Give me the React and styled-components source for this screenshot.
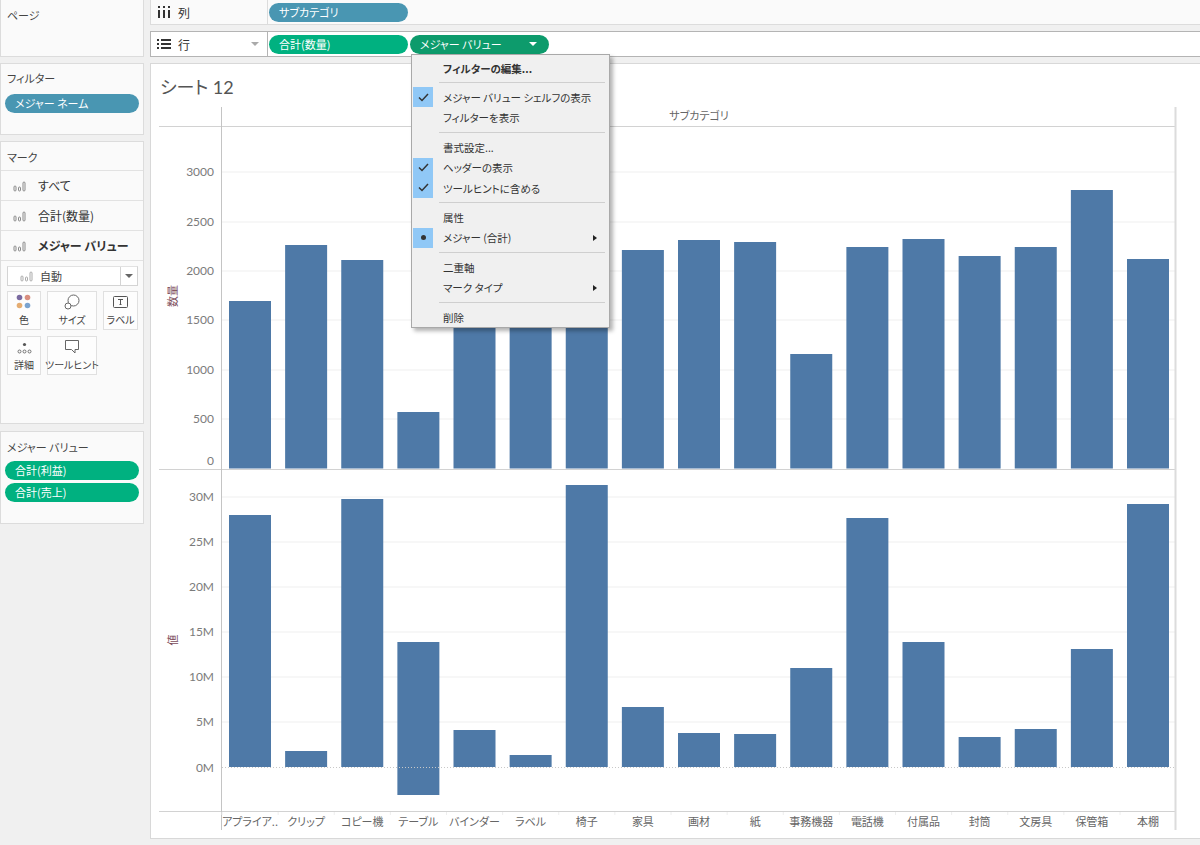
import React from "react";
import styled, { createGlobalStyle } from "styled-components";

const GlobalStyle = createGlobalStyle`
  html, body {
    margin: 0;
    padding: 0;
    background: #f0f0f0;
    overflow: hidden;
  }
  body {
    font-family: "Noto Sans CJK JP", "Noto Sans", sans-serif;
    font-feature-settings: "palt";
    color: #333;
  }
`;

const Page = styled.div`
  position: relative;
  width: 1200px;
  height: 845px;
  display: grid;
  grid-template-columns: 144px 1fr;
  column-gap: 6px;
`;

const Side = styled.div`
  display: flex;
  flex-direction: column;
`;

const Panel = styled.div`
  box-sizing: border-box;
  height: ${(p) => p.$h}px;
  margin-bottom: ${(p) => p.$mb || 6}px;
  background: #fafafa;
  border: 1px solid #dcdcdc;
  border-top: ${(p) => (p.$noTop ? "none" : "1px solid #dcdcdc")};
  padding: ${(p) => p.$pad || "0"};
`;

const PanelTitle = styled.div`
  font-size: 11px;
  line-height: 16px;
  padding-left: 6px;
  color: #444;
  margin-bottom: ${(p) => p.$mb || 0}px;
`;

const Pill = styled.div`
  box-sizing: border-box;
  display: flex;
  align-items: center;
  justify-content: space-between;
  width: ${(p) => p.$w || 134}px;
  height: 19px;
  border-radius: 10px;
  padding: 0 11px 0 10px;
  margin: ${(p) => p.$m || 0};
  background: ${(p) => p.$bg || "#4996b2"};
  color: #fff;
  font-size: 11px;
  line-height: 19px;
  white-space: nowrap;
`;

const MarkRow = styled.div`
  box-sizing: border-box;
  height: 30px;
  display: flex;
  align-items: center;
  gap: 12px;
  padding-left: 12px;
  border-top: 1px solid #e2e2e2;
  font-size: 12px;
  font-weight: ${(p) => (p.$bold ? 700 : 400)};
  color: #333;
`;

const MarkSelect = styled.div`
  box-sizing: border-box;
  display: flex;
  align-items: center;
  height: 20px;
  margin: 5px 5px 5px 6px;
  padding-left: 12px;
  gap: 7px;
  background: #fff;
  border: 1px solid #d4d4d4;
  border-top: 1px solid #e2e2e2;
  font-size: 11px;
  color: #444;
`;

const SelectArrow = styled.span`
  margin-left: auto;
  width: 16px;
  height: 18px;
  border-left: 1px solid #d4d4d4;
  display: flex;
  align-items: center;
  justify-content: center;
  &::after {
    content: "";
    border-left: 4px solid transparent;
    border-right: 4px solid transparent;
    border-top: 4px solid #666;
  }
`;

const MarkGrid = styled.div`
  display: grid;
  grid-template-columns: 34px 50px 35px;
  grid-auto-rows: 39px;
  gap: 6px;
  margin-left: 6px;
`;

const MarkButton = styled.div`
  box-sizing: border-box;
  border: 1px solid #e0e0e0;
  background: #fdfdfd;
  display: flex;
  flex-direction: column;
  align-items: center;
  justify-content: flex-end;
  font-size: 10px;
  line-height: 14px;
  padding-bottom: 2px;
  color: #444;
  white-space: nowrap;
  svg {
    margin-bottom: 3px;
  }
`;

const Main = styled.div`
  display: flex;
  flex-direction: column;
  min-width: 0;
`;

const Shelf = styled.div`
  box-sizing: border-box;
  display: flex;
  height: ${(p) => p.$h}px;
  margin-bottom: ${(p) => p.$mb}px;
  background: #fff;
  border: 1px solid ${(p) => (p.$dark ? "#b4b4b4" : "#dcdcdc")};
  border-top: ${(p) => (p.$noTop ? "none" : undefined)};
  border-right: none;
  background: ${(p) => (p.$dark ? "#fff" : "#fafafa")};
`;

const ShelfLabel = styled.div`
  box-sizing: border-box;
  width: 117px;
  display: flex;
  align-items: center;
  gap: 7px;
  padding-left: 6px;
  font-size: 12px;
  color: #333;
  border-right: 1px solid ${(p) => (p.$dark ? "#b4b4b4" : "#dcdcdc")};
`;

const ShelfArrow = styled.span`
  margin-left: auto;
  margin-right: 8px;
  border-left: 4px solid transparent;
  border-right: 4px solid transparent;
  border-top: 4px solid #aaa;
`;

const ShelfPills = styled.div`
  display: flex;
  align-items: center;
  gap: 2px;
  padding-left: 1px;
  padding-top: ${(p) => p.$pt || 0}px;
`;

const DownTri = styled.span`
  border-left: 4px solid transparent;
  border-right: 4px solid transparent;
  border-top: 4px solid #fff;
  margin-right: 1px;
`;

const Card = styled.div`
  box-sizing: border-box;
  height: 776px;
  background: #fff;
  border: 1px solid #d8d8d8;
  border-right: none;
  display: flex;
  flex-direction: column;
`;

const SheetTitle = styled.div`
  font-size: 18px;
  line-height: 24px;
  height: 39px;
  padding: 11px 0 0 9px;
  box-sizing: border-box;
  color: #555;
  font-family: "Lato", "Noto Sans CJK JP", sans-serif;
`;

const ChartSvg = styled.svg`
  display: block;
  width: 1049px;
  height: 735px;
`;

const AxisText = styled.text`
  font-family: "Lato", "Noto Sans CJK JP", sans-serif;
  font-size: 12px;
  fill: #7b7b7b;
  text-anchor: ${(p) => p.$anchor || "end"};
`;

const CategoryText = styled.text`
  font-family: "Noto Sans CJK JP", sans-serif;
  font-feature-settings: "palt";
  font-size: 11px;
  fill: #666;
  text-anchor: middle;
`;

const MeasureText = styled.text`
  font-family: "Noto Sans CJK JP", sans-serif;
  font-size: 11px;
  fill: #7a4a58;
  text-anchor: middle;
`;

const Menu = styled.div`
  position: absolute;
  left: 411px;
  top: 54px;
  box-sizing: border-box;
  width: 199px;
  height: 274px;
  padding-top: 3px;
  background: #f0f0f0;
  border: 1px solid #a9a9a9;
  box-shadow: 3px 3px 4px rgba(0, 0, 0, 0.3);
`;

const MenuRow = styled.div`
  position: relative;
  height: 20.4px;
  display: flex;
  align-items: center;
  padding-left: 31px;
  font-size: 10.5px;
  font-weight: ${(p) => (p.$bold ? 700 : 400)};
  color: #333;
  white-space: nowrap;
`;

const MenuMark = styled.span`
  position: absolute;
  left: 1px;
  top: 0;
  width: 20px;
  height: 20px;
  background: #90c8f6;
  display: flex;
  align-items: center;
  justify-content: center;
`;

const MenuDot = styled.span`
  width: 5px;
  height: 5px;
  border-radius: 50%;
  background: #333;
`;

const MenuSub = styled.span`
  position: absolute;
  right: 12px;
  top: 7px;
  border-top: 3.5px solid transparent;
  border-bottom: 3.5px solid transparent;
  border-left: 4px solid #222;
`;

const MenuSep = styled.div`
  height: 9px;
  margin: 0 4px 0 27px;
  display: flex;
  align-items: center;
  &::after {
    content: "";
    flex: 1;
    height: 1px;
    background: #cfcfcf;
  }
`;

const BarsIcon = ({ color = "#8a8a8a" }) => (
  <svg width="13" height="12" viewBox="0 0 13 12" fill="none" stroke={color} strokeWidth="1">
    <rect x="1" y="6" width="2" height="5" rx="1" />
    <rect x="5.5" y="7" width="2" height="4" rx="1" />
    <rect x="10" y="2" width="2" height="9" rx="1" />
  </svg>
);

const ColumnsIcon = () => (
  <svg width="14" height="12" viewBox="0 0 14 12" fill="#333">
    <rect x="1" y="0" width="2" height="2" />
    <rect x="6" y="0" width="2" height="2" />
    <rect x="11" y="0" width="2" height="2" />
    <rect x="1" y="4" width="2" height="8" />
    <rect x="6" y="4" width="2" height="8" />
    <rect x="11" y="4" width="2" height="8" />
  </svg>
);

const RowsIcon = () => (
  <svg width="14" height="12" viewBox="0 0 14 12" fill="#333">
    <rect x="0" y="1" width="2" height="2" />
    <rect x="4" y="1" width="10" height="2" />
    <rect x="0" y="5" width="2" height="2" />
    <rect x="4" y="5" width="10" height="2" />
    <rect x="0" y="9" width="2" height="2" />
    <rect x="4" y="9" width="10" height="2" />
  </svg>
);

const ColorIcon = () => (
  <svg width="16" height="16" viewBox="0 0 16 16">
    <circle cx="3.5" cy="3.5" r="2.8" fill="#7a6aa0" />
    <circle cx="11.5" cy="3.5" r="2.8" fill="#d98f80" />
    <circle cx="3.5" cy="11.5" r="2.8" fill="#e5ad72" />
    <circle cx="11.5" cy="11.5" r="2.8" fill="#7ba4d0" />
  </svg>
);

const SizeIcon = () => (
  <svg width="16" height="16" viewBox="0 0 16 16" fill="#fff" stroke="#666" strokeWidth="1">
    <circle cx="9.5" cy="6.5" r="5.5" />
    <circle cx="4" cy="12" r="3" />
  </svg>
);

const LabelIcon = () => (
  <svg width="16" height="16" viewBox="0 0 16 16" fill="none" stroke="#555" strokeWidth="1">
    <rect x="0.5" y="2.5" width="14" height="11" rx="1" />
    <path d="M5 5.5h5M7.5 5.5v5M6.5 10.5h2" />
  </svg>
);

const DetailIcon = () => (
  <svg width="15" height="14" viewBox="0 0 15 14" fill="none" stroke="#666" strokeWidth="0.9">
    <circle cx="7.5" cy="3.5" r="1.6" fill="#555" stroke="none" />
    <circle cx="2.5" cy="10.5" r="1.5" />
    <circle cx="7.5" cy="10.5" r="1.5" />
    <circle cx="12.5" cy="10.5" r="1.5" />
  </svg>
);

const TooltipIcon = () => (
  <svg width="16" height="16" viewBox="0 0 16 16" fill="#fff" stroke="#666" strokeWidth="1">
    <path d="M1.5 1.5h13v9h-3.5v3.5l-3.5-3.5h-6z" />
  </svg>
);

const CheckIcon = () => (
  <svg width="11" height="9" viewBox="0 0 11 9" fill="none" stroke="#333" strokeWidth="1.5">
    <path d="M1 4.5l3 3 6-6.5" />
  </svg>
);

const BAR_X = (i) => 229 + i * 56.125;
const ZERO_TOP = 468.5;
const ZERO_BOTTOM = 767;

const categories = [
  { name: "アプライア..", top: 301, low: 515 },
  { name: "クリップ", top: 245, low: 751 },
  { name: "コピー機", top: 260, low: 499 },
  { name: "テーブル", top: 412, low: 642, under: 795 },
  { name: "バインダー", top: 250, low: 730 },
  { name: "ラベル", top: 250, low: 755 },
  { name: "椅子", top: 250, low: 485 },
  { name: "家具", top: 250, low: 707 },
  { name: "画材", top: 240, low: 733 },
  { name: "紙", top: 242, low: 734 },
  { name: "事務機器", top: 354, low: 668 },
  { name: "電話機", top: 247, low: 518 },
  { name: "付属品", top: 239, low: 642 },
  { name: "封筒", top: 256, low: 737 },
  { name: "文房具", top: 247, low: 729 },
  { name: "保管箱", top: 190, low: 649 },
  { name: "本棚", top: 259, low: 504 },
];

const topTicks = [
  { label: "3000", y: 172 },
  { label: "2500", y: 222 },
  { label: "2000", y: 271 },
  { label: "1500", y: 320 },
  { label: "1000", y: 370 },
  { label: "500", y: 419 },
];

const lowTicks = [
  { label: "30M", y: 497 },
  { label: "25M", y: 542 },
  { label: "20M", y: 587 },
  { label: "15M", y: 632 },
  { label: "10M", y: 677 },
  { label: "5M", y: 722 },
];

const Chart = () => (
  <ChartSvg viewBox="151 103 1049 735">
    {[...topTicks, ...lowTicks].map((t) => (
      <g key={t.label}>
        <line x1="222" x2="1175" y1={t.y} y2={t.y} stroke="#efefef" />
        <AxisText x="214" y={t.y + 4}>{t.label}</AxisText>
      </g>
    ))}
    <AxisText x="214" y="465">0</AxisText>
    <AxisText x="214" y={ZERO_BOTTOM + 5}>0M</AxisText>

    {categories.map((c, i) => (
      <rect key={c.name} x={BAR_X(i)} y={c.top} width="42" height={ZERO_TOP - c.top} fill="#4e79a7" />
    ))}
    {categories.map((c, i) => (
      <rect
        key={c.name}
        x={BAR_X(i)}
        y={c.low}
        width="42"
        height={(c.under || ZERO_BOTTOM) - c.low}
        fill="#4e79a7"
      />
    ))}
    <line x1="222" x2="1175" y1={ZERO_BOTTOM + 0.5} y2={ZERO_BOTTOM + 0.5} stroke="#c8c8c8" strokeDasharray="1 2" />

    <line x1="159" x2="1175" y1="126.5" y2="126.5" stroke="#d2d2d2" strokeWidth="1.2" />
    <line x1="159" x2="1175" y1="469.5" y2="469.5" stroke="#d2d2d2" strokeWidth="1.2" />
    <line x1="159" x2="1175" y1="811.5" y2="811.5" stroke="#d2d2d2" strokeWidth="1.2" />
    <line x1="221.5" x2="221.5" y1="107" y2="830" stroke="#c4c4c4" />
    <line x1="1175.5" x2="1175.5" y1="107" y2="830" stroke="#dcdcdc" strokeWidth="2" />
    {categories.map((c, i) => (
      <line key={c.name} x1={BAR_X(i) - 7} x2={BAR_X(i) - 7} y1="812" y2="815" stroke="#eeeeee" />
    ))}

    <CategoryText x="699" y="120">サブカテゴリ</CategoryText>
    {categories.map((c, i) => (
      <CategoryText key={c.name} x={BAR_X(i) + 21} y="826">{c.name}</CategoryText>
    ))}
    <MeasureText transform="translate(177 296) rotate(-90)">数量</MeasureText>
    <MeasureText transform="translate(177 640) rotate(-90)">値</MeasureText>
  </ChartSvg>
);

const App = () => (
  <>
    <GlobalStyle />
    <Page>
      <Side>
        <Panel $h={57} $noTop $pad="7px 0 0">
          <PanelTitle>ページ</PanelTitle>
        </Panel>
        <Panel $h={72} $pad="6px 0 0 4px">
          <PanelTitle $mb={8} style={{ paddingLeft: 2 }}>フィルター</PanelTitle>
          <Pill>メジャー ネーム</Pill>
        </Panel>
        <Panel $h={283} $mb={7} $pad="7px 0 0">
          <PanelTitle $mb={5}>マーク</PanelTitle>
          <MarkRow><BarsIcon />すべて</MarkRow>
          <MarkRow><BarsIcon />合計(数量)</MarkRow>
          <MarkRow $bold><BarsIcon />メジャー バリュー</MarkRow>
          <div style={{ borderTop: "1px solid #e2e2e2" }}>
            <MarkSelect><BarsIcon color="#aaa" />自動<SelectArrow /></MarkSelect>
          </div>
          <MarkGrid>
            <MarkButton><ColorIcon />色</MarkButton>
            <MarkButton><SizeIcon />サイズ</MarkButton>
            <MarkButton><LabelIcon />ラベル</MarkButton>
            <MarkButton><DetailIcon />詳細</MarkButton>
            <MarkButton><TooltipIcon />ツールヒント</MarkButton>
          </MarkGrid>
        </Panel>
        <Panel $h={93} $pad="7px 0 0 4px">
          <PanelTitle $mb={6} style={{ paddingLeft: 2 }}>メジャー バリュー</PanelTitle>
          <Pill $bg="#00b180" $m="0 0 3px">合計(利益)</Pill>
          <Pill $bg="#00b180">合計(売上)</Pill>
        </Panel>
      </Side>
      <Main>
        <Shelf $h={25} $mb={6} $noTop>
          <ShelfLabel><ColumnsIcon />列</ShelfLabel>
          <ShelfPills>
            <Pill $w={139}>サブカテゴリ</Pill>
          </ShelfPills>
        </Shelf>
        <Shelf $h={26} $mb={6} $dark>
          <ShelfLabel $dark><RowsIcon />行<ShelfArrow /></ShelfLabel>
          <ShelfPills>
            <Pill $w={139} $bg="#00b180">合計(数量)</Pill>
            <Pill $w={139} $bg="#0d9b6c">メジャー バリュー<DownTri /></Pill>
          </ShelfPills>
        </Shelf>
        <Card>
          <SheetTitle>シート 12</SheetTitle>
          <Chart />
        </Card>
      </Main>
      <Menu>
        <MenuRow $bold>フィルターの編集...</MenuRow>
        <MenuSep />
        <MenuRow><MenuMark><CheckIcon /></MenuMark>メジャー バリュー シェルフの表示</MenuRow>
        <MenuRow>フィルターを表示</MenuRow>
        <MenuSep />
        <MenuRow>書式設定...</MenuRow>
        <MenuRow><MenuMark><CheckIcon /></MenuMark>ヘッダーの表示</MenuRow>
        <MenuRow><MenuMark><CheckIcon /></MenuMark>ツールヒントに含める</MenuRow>
        <MenuSep />
        <MenuRow>属性</MenuRow>
        <MenuRow><MenuMark><MenuDot /></MenuMark>メジャー (合計)<MenuSub /></MenuRow>
        <MenuSep />
        <MenuRow>二重軸</MenuRow>
        <MenuRow>マーク タイプ<MenuSub /></MenuRow>
        <MenuSep />
        <MenuRow>削除</MenuRow>
      </Menu>
    </Page>
  </>
);

export default App;
